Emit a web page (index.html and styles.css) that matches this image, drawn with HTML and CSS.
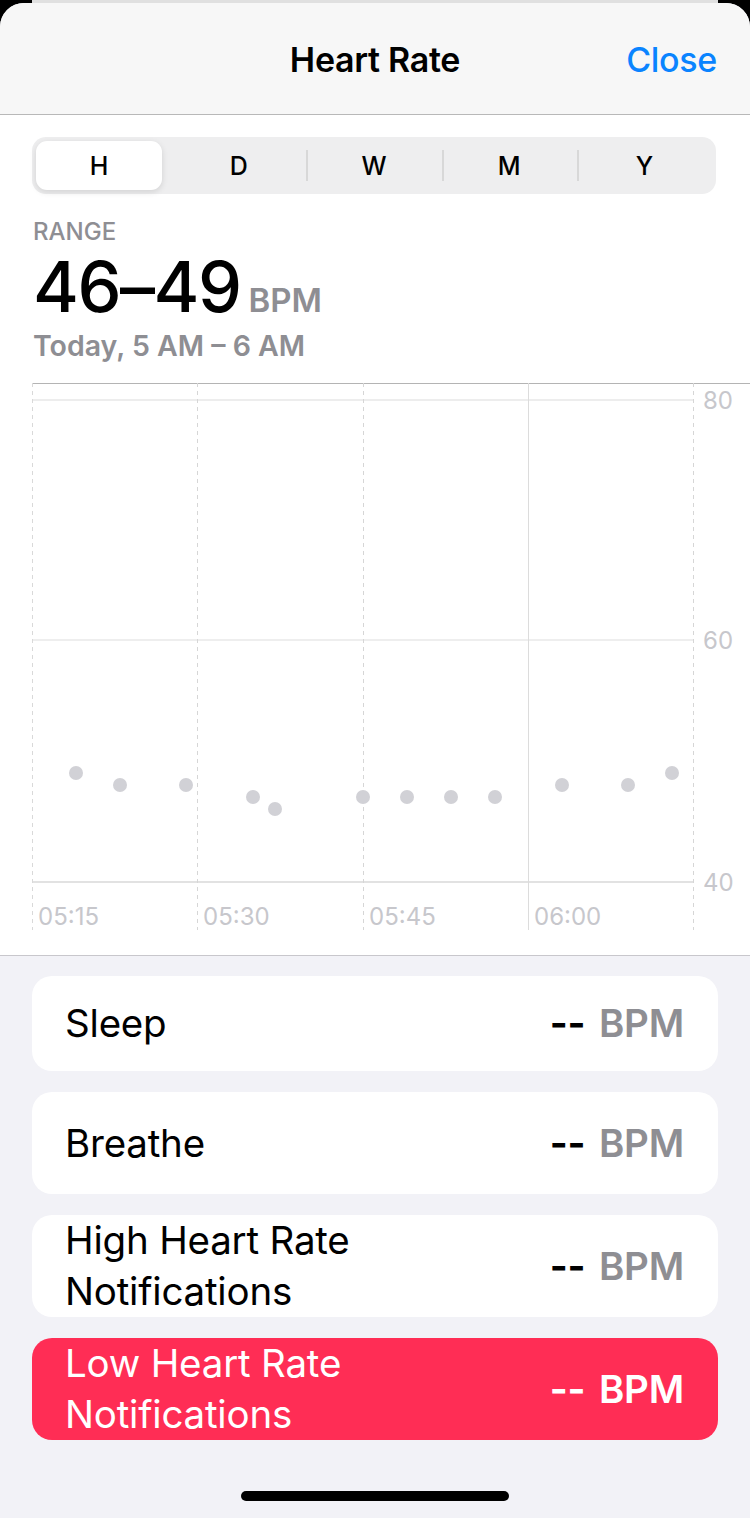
FILE: index.html
```html
<!DOCTYPE html>
<html lang="en">

<head>
    <meta charset="UTF-8">
    <meta name="viewport" content="width=device-width, initial-scale=1.0">
    <title>Heart Rate</title>
    <link rel="stylesheet" href="styles.css">
</head>

<body>
    <div class="back-card"></div>

    <div class="sheet">
        <div class="header">
            <span></span>
            <h1>Heart Rate</h1>
            <a class="close" href="#">Close</a>
        </div>

        <div class="panel">
            <div class="segments">
                <div class="seg active">H</div>
                <div class="seg">D</div>
                <div class="seg divided">W</div>
                <div class="seg divided">M</div>
                <div class="seg divided">Y</div>
            </div>

            <div class="summary">
                <div class="label">RANGE</div>
                <div class="value">46–49<span class="unit">BPM</span></div>
                <div class="when">Today, 5 AM – 6 AM</div>
            </div>

            <svg class="chart" width="750" height="572" viewBox="0 0 750 572">
                <!-- top rule -->
                <line x1="32" y1="0.5" x2="750" y2="0.5" stroke="#b4b4b4" stroke-width="1" />

                <!-- horizontal grid: 80 / 60 / 40 -->
                <line x1="32" y1="17" x2="693" y2="17" stroke="#ededed" stroke-width="2" />
                <line x1="32" y1="257" x2="693" y2="257" stroke="#e9e9e9" stroke-width="1.5" />
                <line x1="32" y1="499" x2="693" y2="499" stroke="#e2e2e2" stroke-width="2" />

                <!-- vertical grid -->
                <line x1="32.5" y1="0" x2="32.5" y2="547" stroke="#d9d9d9" stroke-dasharray="4 4" />
                <line x1="197.5" y1="0" x2="197.5" y2="547" stroke="#d6d6d6" stroke-dasharray="4 4" />
                <line x1="363.5" y1="0" x2="363.5" y2="547" stroke="#d6d6d6" stroke-dasharray="4 4" />
                <line x1="528.5" y1="0" x2="528.5" y2="547" stroke="#dcdcdc" />
                <line x1="693.5" y1="0" x2="693.5" y2="547" stroke="#d6d6d6" stroke-dasharray="4 4" />

                <!-- y axis -->
                <text class="axis" x="703" y="26">80</text>
                <text class="axis" x="703" y="266">60</text>
                <text class="axis" x="703" y="508">40</text>

                <!-- x axis -->
                <text class="axis" x="38" y="542">05:15</text>
                <text class="axis" x="203" y="542">05:30</text>
                <text class="axis" x="369" y="542">05:45</text>
                <text class="axis" x="534" y="542">06:00</text>

                <!-- readings -->
                <g fill="#d1d1d6">
                    <circle cx="76" cy="390" r="7" />
                    <circle cx="120" cy="402" r="7" />
                    <circle cx="186" cy="402" r="7" />
                    <circle cx="253" cy="414" r="7" />
                    <circle cx="275" cy="426" r="7" />
                    <circle cx="363" cy="414" r="7" />
                    <circle cx="407" cy="414" r="7" />
                    <circle cx="451" cy="414" r="7" />
                    <circle cx="495" cy="414" r="7" />
                    <circle cx="562" cy="402" r="7" />
                    <circle cx="628" cy="402" r="7" />
                    <circle cx="672" cy="390" r="7" />
                </g>
            </svg>
        </div>

        <div class="list">
            <div class="row short">
                <span class="name">Sleep</span>
                <span class="bpm"><b>--</b> BPM</span>
            </div>
            <div class="row">
                <span class="name">Breathe</span>
                <span class="bpm"><b>--</b> BPM</span>
            </div>
            <div class="row">
                <span class="name">High Heart Rate<br>Notifications</span>
                <span class="bpm"><b>--</b> BPM</span>
            </div>
            <div class="row alert">
                <span class="name">Low Heart Rate<br>Notifications</span>
                <span class="bpm"><b>--</b> BPM</span>
            </div>
        </div>

        <div class="home-bar"></div>
    </div>
</body>

</html>
```

FILE: styles.css
```css
body {
    margin: 0;
    background-color: #000;
    font-family: "Inter", "Noto Sans", sans-serif;
    color: #000;
}

.back-card {
    height: 3px;
    margin: 0 32px;
    background-color: #e0e0e0;
}

.sheet {
    background-color: #f2f2f7;
    border-radius: 24px 24px 0 0;
    overflow: hidden;
    height: 1515px;
}

.header {
    height: 111px;
    background-color: #f7f7f7;
    border-bottom: 1px solid #b8b8b8;
    display: grid;
    grid-template-columns: 1fr auto 1fr;
    align-items: center;
    padding: 0 33px;
}

.header h1 {
    margin: 0;
    font-size: 34px;
    font-weight: 600;
    letter-spacing: -0.3px;
    padding-top: 2px;
}

.close {
    justify-self: end;
    color: #0a84ff;
    text-decoration: none;
    font-size: 34px;
    font-weight: 500;
    letter-spacing: -0.3px;
    padding-top: 2px;
}

.panel {
    background-color: #fff;
    padding-top: 22px;
    border-bottom: 1px solid #c8c7cc;
}

.segments {
    margin: 0 34px 0 32px;
    height: 57px;
    background-color: #eeeeef;
    border-radius: 14px;
    display: grid;
    grid-template-columns: repeat(5, 1fr);
    padding: 4px;
    box-sizing: border-box;
}

.seg {
    display: flex;
    align-items: center;
    justify-content: center;
    font-size: 25px;
    font-weight: 500;
    position: relative;
}

.seg.active {
    background-color: #fff;
    border-radius: 11px;
    margin-right: 9px;
    box-shadow: 0 2px 6px rgba(0, 0, 0, 0.12);
}

.seg.divided::before {
    content: "";
    position: absolute;
    left: 0;
    top: 9px;
    bottom: 9px;
    width: 2px;
    background-color: #d8d8d8;
}

.summary {
    padding: 23px 33px 19px;
}

.label {
    color: #8e8e93;
    font-size: 24px;
    font-weight: 500;
    line-height: 29px;
}

.value {
    font-size: 70px;
    font-weight: 500;
    letter-spacing: -1.5px;
    line-height: 74px;
    margin-top: 4px;
}

.unit {
    color: #8e8e93;
    font-size: 33px;
    font-weight: 600;
    letter-spacing: 0;
    margin-left: 8px;
}

.when {
    color: #8e8e93;
    font-size: 28.5px;
    font-weight: 600;
    line-height: 36px;
    margin-top: -9px;
}

.chart {
    display: block;
}

.axis {
    font-family: "Inter", sans-serif;
    font-size: 24px;
    fill: #c7c7cc;
}

.list {
    padding: 20px 32px 0;
    display: flex;
    flex-direction: column;
    gap: 21px;
}

.row {
    min-height: 102px;
    background-color: #fff;
    border-radius: 20px;
    padding: 0 34px 0 33px;
    display: flex;
    align-items: center;
    justify-content: space-between;
    font-size: 38.5px;
    letter-spacing: -0.2px;
    line-height: 51px;
}

.row.short {
    min-height: 95px;
}

.bpm {
    color: #8e8e93;
    font-weight: 600;
}

.bpm b {
    color: #000;
    font-weight: 700;
    margin-right: 4px;
}

.alert {
    background-color: #ff2d55;
    color: #fff;
}

.alert .bpm,
.alert .bpm b {
    color: #fff;
}

.home-bar {
    width: 268px;
    height: 10px;
    margin: 51px auto 0;
    background-color: #000;
    border-radius: 5px;
}
```
